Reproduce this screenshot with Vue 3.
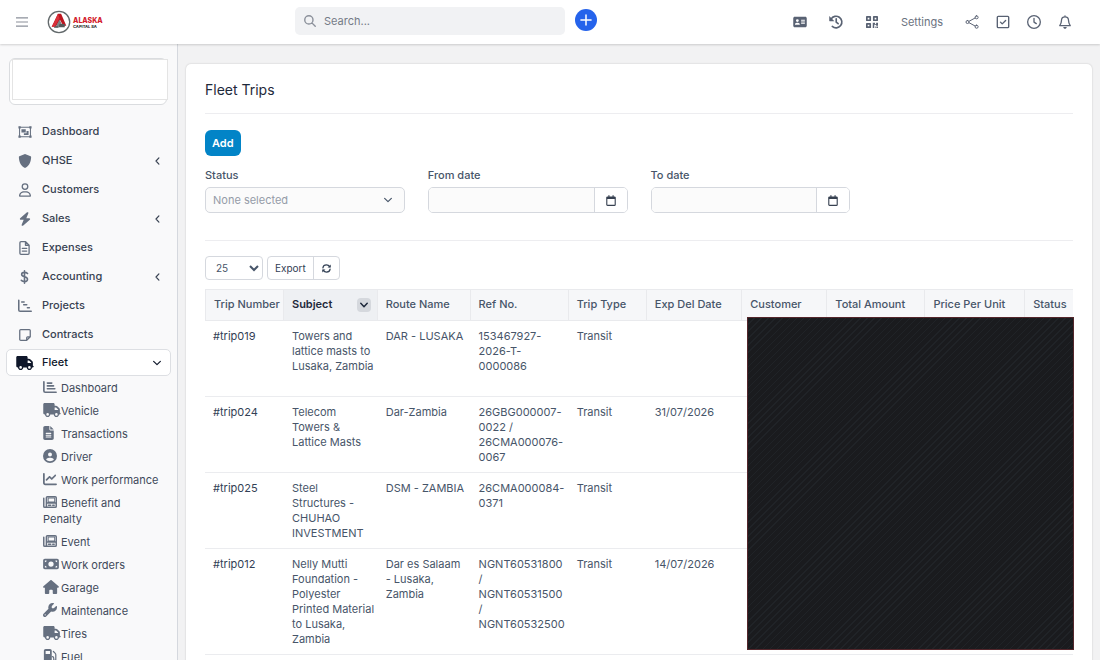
<template>
  <div class="app">
    <header class="topbar">
      <div class="topbar-left">
        <button class="icon-btn menu-btn" type="button" aria-label="Toggle menu">
          <Icon name="bars" :size="12" />
        </button>
        <a class="logo" href="#">
          <svg class="logo-mark" viewBox="0 0 46 46" width="24" height="24" aria-hidden="true">
            <circle cx="23" cy="23" r="20.5" fill="#fff" stroke="#62696b" stroke-width="2.5" />
            <path d="M21 7h6l10 23h-6l-6-11-8 13H9z" fill="#bd1620" />
            <path d="M21 7l-7 16-5 9h6l9-16z" fill="#d9303a" />
            <path d="M24 18l7 14h-4l-2-4-4 5h-5z" fill="#7d8285" />
            <path d="M24 27h10v6H22zM15 31h7v3h-9z" fill="#54585a" />
          </svg>
          <span class="logo-text">
            <span class="logo-name">ALASKA</span>
            <span class="logo-sub">CAPITAL SA</span>
          </span>
        </a>
      </div>

      <label class="search">
        <Icon name="search" :size="12" />
        <input type="search" placeholder="Search..." aria-label="Search" />
      </label>
      <button class="plus-btn" type="button" aria-label="Quick create">
        <Icon name="plus" :size="12" />
      </button>

      <nav class="topbar-right">
        <button class="icon-btn" type="button" aria-label="Contacts"><Icon name="idCard" :size="12" /></button>
        <button class="icon-btn" type="button" aria-label="History"><Icon name="history" :size="14" /></button>
        <button class="icon-btn" type="button" aria-label="QR code"><Icon name="qr" :size="12" /></button>
        <a class="settings" href="#">Settings</a>
        <div class="topbar-tools">
          <button class="icon-btn" type="button" aria-label="Share"><Icon name="share" :size="14" /></button>
          <button class="icon-btn" type="button" aria-label="Tasks"><Icon name="check" :size="14" /></button>
          <button class="icon-btn" type="button" aria-label="Timers"><Icon name="clock" :size="14" /></button>
          <button class="icon-btn" type="button" aria-label="Notifications"><Icon name="bell" :size="14" /></button>
        </div>
      </nav>
    </header>

    <div class="body">
      <aside class="sidebar">
        <div class="profile">
          <div class="profile-cover"></div>
        </div>

        <ul class="menu">
          <li v-for="item in menu" :key="item.label">
            <a class="menu-item" :class="{ active: item.open }" href="#">
              <span class="menu-icon"><Icon :name="item.icon" :size="item.size || 14" /></span>
              <span class="menu-label">{{ item.label }}</span>
              <Icon v-if="item.arrow" class="menu-arrow" :name="item.open ? 'down' : 'left'" :size="8" />
            </a>
            <ul v-if="item.open" class="submenu">
              <li v-for="sub in fleetMenu" :key="sub.label">
                <a href="#"><span class="sub-icon"><Icon :name="sub.icon" :size="14" /></span>{{ sub.label }}</a>
              </li>
            </ul>
          </li>
        </ul>
      </aside>

      <main class="content">
        <section class="card">
          <h1>Fleet Trips</h1>
          <hr />
          <button class="add-btn" type="button">Add</button>

          <div class="filters">
            <div class="field">
              <label for="status">Status</label>
              <div class="select-wrap">
                <select id="status" v-model="status">
                  <option value="">None selected</option>
                  <option value="transit">Transit</option>
                </select>
                <Icon name="down" :size="8" />
              </div>
            </div>
            <div class="field">
              <label for="from">From date</label>
              <div class="date-group">
                <input id="from" v-model="fromDate" type="text" />
                <button type="button" aria-label="Pick from date"><Icon name="calendar" :size="11" /></button>
              </div>
            </div>
            <div class="field">
              <label for="to">To date</label>
              <div class="date-group">
                <input id="to" v-model="toDate" type="text" />
                <button type="button" aria-label="Pick to date"><Icon name="calendar" :size="11" /></button>
              </div>
            </div>
          </div>
          <hr />

          <div class="table-tools">
            <select v-model="pageSize" class="page-size" aria-label="Rows per page">
              <option>10</option>
              <option>25</option>
              <option>50</option>
            </select>
            <div class="btn-group">
              <button type="button">Export</button>
              <button type="button" aria-label="Reload"><Icon name="reload" :size="9" /></button>
            </div>
          </div>

          <div class="table-wrap">
            <table>
              <colgroup>
                <col v-for="col in columns" :key="col.label" :style="{ width: col.width + '%' }" />
              </colgroup>
              <thead>
                <tr>
                  <th v-for="col in columns" :key="col.label" :class="{ sorted: col.sorted }">
                    <div class="th-inner">
                      {{ col.label }}
                      <span v-if="col.sorted" class="sort"><Icon name="downBold" :size="8" /></span>
                    </div>
                  </th>
                </tr>
              </thead>
              <tbody>
                <tr v-for="row in rows" :key="row.number">
                  <td><a href="#">{{ row.number }}</a></td>
                  <td>{{ row.subject }}</td>
                  <td>{{ row.route }}</td>
                  <td>{{ row.ref }}</td>
                  <td>{{ row.type }}</td>
                  <td>{{ row.date }}</td>
                  <td></td>
                  <td></td>
                  <td></td>
                  <td></td>
                </tr>
              </tbody>
            </table>
            <div class="table-mask"></div>
          </div>
        </section>
      </main>
    </div>
  </div>
</template>

<script setup>
import { ref, h } from 'vue'

// d: filled path, s: stroked path, sw: stroke width
const icons = {
  bars: { s: 'M0 80H512M0 256H512M0 432H512', sw: 44, cap: 'butt' },
  search: { s: 'M208 32a176 176 0 1 0 0 352a176 176 0 1 0 0-352zM336 336L480 480', sw: 60 },
  plus: { s: 'M256 40V472M40 256H472', sw: 64 },
  idCard: { w: 576, d: 'M64 32h448c35 0 64 29 64 64v320c0 35-29 64-64 64H64c-35 0-64-29-64-64V96c0-35 29-64 64-64zM176 136a60 60 0 1 0 0 120a60 60 0 1 0 0-120zM72 368h208c0-50-36-80-80-80h-48c-44 0-80 30-80 80zM336 160v40h160v-40zM336 232v40h160v-40zM336 304v40h160v-40z' },
  history: { s: 'M76 150A212 212 0 1 1 120 420M264 140V262L334 318', sw: 60, d: 'M8 32V208c0 10 8 16 16 16H200z' },
  qr: { s: 'M36 36H180V180H36zM332 36H476V180H332zM36 332H180V476H36z', sw: 72, d: 'M288 288h96v48h48v-48h80v128h-80v-40h-80v136h-64zM400 448h48v64h-48zM464 448h48v64h-48z' },
  share: { s: 'M148 230L372 108M148 282L372 404M92 200a56 56 0 1 0 0 112a56 56 0 1 0 0-112zM424 28a56 56 0 1 0 0 112a56 56 0 1 0 0-112zM424 372a56 56 0 1 0 0 112a56 56 0 1 0 0-112z', sw: 36 },
  check: { s: 'M80 48H432a32 32 0 0 1 32 32V432a32 32 0 0 1-32 32H80a32 32 0 0 1-32-32V80a32 32 0 0 1 32-32zM164 260L228 324L352 200', sw: 50 },
  clock: { s: 'M256 24a232 232 0 1 0 0 464a232 232 0 1 0 0-464zM256 120V260L340 316', sw: 48 },
  bell: { w: 448, s: 'M224 24V64M224 64C140 64 92 124 92 200C92 290 66 330 28 392H420C382 330 356 290 356 200C356 124 308 64 224 64z', sw: 48, d: 'M160 440h128c0 40-28 72-64 72s-64-32-64-72z' },
  left: { w: 320, s: 'M250 60L64 256L250 452', sw: 76 },
  down: { s: 'M40 150L256 362L472 150', sw: 76 },
  downBold: { s: 'M50 150L256 362L462 150', sw: 96 },
  calendar: { w: 448, s: 'M64 96H384a36 36 0 0 1 36 36V448a36 36 0 0 1-36 36H64a36 36 0 0 1-36-36V132a36 36 0 0 1 36-36zM128 24V90M320 24V90', sw: 52, d: 'M28 90H420V184H28z' },
  reload: { s: 'M50 220C66 110 150 50 256 50C340 50 400 90 450 160M462 292C446 402 362 462 256 462C172 462 112 422 62 352', sw: 68, d: 'M496 24V206H314zM16 488V306H198z' },
  objectGroup: { w: 576, s: 'M56 56H520V456H56z', sw: 44, d: 'M8 8h96v96H8zM472 8h96v96h-96zM8 408h96v96H8zM472 408h96v96h-96zM136 136h184v144H136zM352 208h88v176H240v-80h112z' },
  shield: { d: 'M256 0L462 84C474 88 480 100 480 114C478 230 440 420 276 506C264 513 248 513 236 506C72 420 34 230 32 114C32 100 38 88 50 84z' },
  user: { w: 448, d: 'M304 128a80 80 0 1 0-160 0 80 80 0 1 0 160 0zM96 128a128 128 0 1 1 256 0A128 128 0 1 1 96 128zM49.3 464H398.7c-8.9-63.3-63.3-112-129-112H178.3c-65.7 0-120.1 48.7-129 112zM0 482.3C0 383.8 79.8 304 178.3 304h91.4C368.2 304 448 383.8 448 482.3c0 16.4-13.3 29.7-29.7 29.7H29.7C13.3 512 0 498.7 0 482.3z' },
  bolt: { w: 448, d: 'M349.4 44.6c5.9-13.7 1.5-29.7-10.6-38.5s-28.6-8-39.9 1.8l-256 224c-10 8.8-13.6 22.9-8.9 35.3S50.7 288 64 288H175.5L98.6 467.4c-5.9 13.7-1.5 29.7 10.6 38.5s28.6 8 39.9-1.8l256-224c10-8.8 13.6-22.9 8.9-35.3s-16.6-20.7-30-20.7H272.5L349.4 44.6z' },
  fileOutline: { w: 384, s: 'M64 24H232L360 152V448a40 40 0 0 1-40 40H64a40 40 0 0 1-40-40V64a40 40 0 0 1 40-40zM228 28V156H356M112 272H272M112 368H272', sw: 48 },
  dollar: { w: 320, s: 'M160 28V484M272 130C240 98 200 88 156 88C96 88 56 116 56 162C56 270 270 226 270 340C270 394 220 424 160 424C110 424 72 404 44 380', sw: 58 },
  gantt: { s: 'M28 48V400a48 48 0 0 0 48 48H484M136 112H224M208 208H320M344 320H416', sw: 56 },
  note: { w: 448, s: 'M64 56H384a36 36 0 0 1 36 36V324L288 456H64a36 36 0 0 1-36-36V92a36 36 0 0 1 36-36zM288 452V356a32 32 0 0 1 32-32H416', sw: 48 },
  truck: { w: 640, d: 'M48 0C21.5 0 0 21.5 0 48V368c0 26.5 21.5 48 48 48H64c0 53 43 96 96 96s96-43 96-96H384c0 53 43 96 96 96s96-43 96-96h32c17.7 0 32-14.3 32-32s-14.3-32-32-32V288 256 237.3c0-17-6.7-33.3-18.7-45.3L512 114.7c-12-12-28.3-18.7-45.3-18.7H416V48c0-26.5-21.5-48-48-48H48zM416 160h50.7L544 237.3V256H416V160zM112 416a48 48 0 1 1 96 0 48 48 0 1 1 -96 0zm368-48a48 48 0 1 1 0 96 48 48 0 1 1 0-96z' },
  chartBar: { s: 'M32 64V400a48 48 0 0 0 48 48H480M160 112H320M160 216H384M160 320H432', sw: 60 },
  file: { w: 384, d: 'M64 0C28.7 0 0 28.7 0 64V448c0 35.3 28.7 64 64 64H320c35.3 0 64-28.7 64-64V160H256c-17.7 0-32-14.3-32-32V0H64zM256 0V128H384L256 0zM104 248H280c9 0 16 9 16 20s-7 20-16 20H104c-9 0-16-9-16-20s7-20 16-20zm0 68H280c9 0 16 9 16 20s-7 20-16 20H104c-9 0-16-9-16-20s7-20 16-20zm0 68H280c9 0 16 9 16 20s-7 20-16 20H104c-9 0-16-9-16-20s7-20 16-20z' },
  circleUser: { d: 'M399 384.2C376.9 345.8 335.4 320 288 320H224c-47.4 0-88.9 25.8-111 64.2c35.2 39.2 86.2 63.8 143 63.8s107.8-24.7 143-63.8zM0 256a256 256 0 1 1 512 0A256 256 0 1 1 0 256zm256 16a72 72 0 1 0 0-144 72 72 0 1 0 0 144z' },
  chartLine: { d: 'M64 64c0-17.7-14.3-32-32-32S0 46.3 0 64V400c0 44.2 35.8 80 80 80H480c17.7 0 32-14.3 32-32s-14.3-32-32-32H80c-8.8 0-16-7.2-16-16V64zm406.6 86.6c12.5-12.5 12.5-32.8 0-45.3s-32.8-12.5-45.3 0L320 210.7l-57.4-57.4c-12.5-12.5-32.8-12.5-45.3 0l-112 112c-12.5 12.5-12.5 32.8 0 45.3s32.8 12.5 45.3 0L240 221.3l57.4 57.4c12.5 12.5 32.8 12.5 45.3 0l128-128z' },
  newspaper: { s: 'M160 60H448a36 36 0 0 1 36 36V416a36 36 0 0 1-36 36H64a36 36 0 0 1-36-36V120M124 420V96a36 36 0 0 1 36-36M136 290H470M200 374H284M356 374H410', sw: 54, d: 'M170 90H440V290H170zM206 130V236H410V130z' },
  money: { w: 576, d: 'M64 64C28.7 64 0 92.7 0 128V384c0 35.3 28.7 64 64 64H512c35.3 0 64-28.7 64-64V128c0-35.3-28.7-64-64-64H64zM128 384H64V320c35.3 0 64 28.7 64 64zM64 192V128h64c0 35.3-28.7 64-64 64zM448 384c0-35.3 28.7-64 64-64v64H448zM512 192c-35.3 0-64-28.7-64-64h64v64zM288 160a96 96 0 1 1 0 192 96 96 0 1 1 0-192z' },
  house: { w: 576, d: 'M575.8 255.5c0 18-15 32.1-32 32.1h-32l.7 160.2c0 2.7-.2 5.4-.5 8.1V472c0 22.1-17.9 40-40 40H456c-1.1 0-2.2 0-3.3-.1c-1.4 .1-2.8 .1-4.2 .1H416 392c-22.1 0-40-17.9-40-40V448 384c0-17.7-14.3-32-32-32H256c-17.7 0-32 14.3-32 32v64 24c0 22.1-17.9 40-40 40H160 128.1c-1.5 0-3-.1-4.5-.2c-1.2 .1-2.4 .2-3.6 .2H104c-22.1 0-40-17.9-40-40V360c0-.9 0-1.9 .1-2.8V287.6H32c-18 0-32-14-32-32.1c0-9 3-17 10-24L266.4 8c7-7 15-8 22-8s15 2 21 7L564.8 231.5c8 7 12 15 11 24z' },
  wrench: { d: 'M352 320c88.4 0 160-71.6 160-160c0-15.3-2.2-30.1-6.2-44.2c-3.1-10.8-16.4-13.2-24.3-5.3l-76.8 76.8c-3 3-7.1 4.7-11.3 4.7H336c-8.8 0-16-7.2-16-16V118.6c0-4.2 1.7-8.3 4.7-11.3l76.8-76.8c7.9-7.9 5.4-21.2-5.3-24.3C382.1 2.2 367.3 0 352 0C263.6 0 192 71.6 192 160c0 19.1 3.4 37.5 9.5 54.5L19.9 396.1C7.2 408.8 0 426.1 0 444.1C0 481.6 30.4 512 67.9 512c18 0 35.3-7.2 48-19.9L297.5 310.5c17 6.2 35.4 9.5 54.5 9.5zM80 408a24 24 0 1 1 0 48 24 24 0 1 1 0-48z' },
  gas: { s: 'M380 90L440 150C456 166 468 180 468 210V380a36 36 0 0 1-76 0V330C392 300 370 280 340 280', sw: 44, d: 'M32 64C32 29 61 0 96 0H256c35 0 64 29 64 64V448a32 32 0 0 1 0 64H32a32 32 0 0 1 0-64zM96 72V184H256V72z' }
}

const Icon = ({ name, size }) => {
  const i = icons[name]
  const w = i.w || 512
  return h(
    'svg',
    { viewBox: `0 0 ${w} 512`, height: size, width: Math.round((size * w) / 512), class: 'icon', 'aria-hidden': 'true' },
    [
      i.d && h('path', { d: i.d, fill: 'currentColor', 'fill-rule': 'evenodd' }),
      i.s && h('path', {
        d: i.s,
        fill: 'none',
        stroke: 'currentColor',
        'stroke-width': i.sw,
        'stroke-linecap': i.cap || 'round',
        'stroke-linejoin': 'round'
      })
    ]
  )
}
Icon.props = ['name', 'size']

const status = ref('')
const fromDate = ref('')
const toDate = ref('')
const pageSize = ref('25')

const menu = [
  { label: 'Dashboard', icon: 'objectGroup', size: 12 },
  { label: 'QHSE', icon: 'shield', arrow: true },
  { label: 'Customers', icon: 'user' },
  { label: 'Sales', icon: 'bolt', arrow: true },
  { label: 'Expenses', icon: 'fileOutline' },
  { label: 'Accounting', icon: 'dollar', arrow: true },
  { label: 'Projects', icon: 'gantt' },
  { label: 'Contracts', icon: 'note' },
  { label: 'Fleet', icon: 'truck', arrow: true, open: true }
]

const fleetMenu = [
  { label: 'Dashboard', icon: 'chartBar' },
  { label: 'Vehicle', icon: 'truck' },
  { label: 'Transactions', icon: 'file' },
  { label: 'Driver', icon: 'circleUser' },
  { label: 'Work performance', icon: 'chartLine' },
  { label: 'Benefit and Penalty', icon: 'newspaper' },
  { label: 'Event', icon: 'newspaper' },
  { label: 'Work orders', icon: 'money' },
  { label: 'Garage', icon: 'house' },
  { label: 'Maintenance', icon: 'wrench' },
  { label: 'Tires', icon: 'truck' },
  { label: 'Fuel', icon: 'gas' }
]

const columns = [
  { label: 'Trip Number', width: 9.1 },
  { label: 'Subject', width: 10.8, sorted: true },
  { label: 'Route Name', width: 10.7 },
  { label: 'Ref No.', width: 11.3 },
  { label: 'Trip Type', width: 9 },
  { label: 'Exp Del Date', width: 11 },
  { label: 'Customer', width: 9.8 },
  { label: 'Total Amount', width: 11.3 },
  { label: 'Price Per Unit', width: 11.5 },
  { label: 'Status', width: 5.5 }
]

const rows = [
  { number: '#trip019', subject: 'Towers and lattice masts to Lusaka, Zambia', route: 'DAR - LUSAKA', ref: '153467927-2026-T-0000086', type: 'Transit', date: '' },
  { number: '#trip024', subject: 'Telecom Towers & Lattice Masts', route: 'Dar-Zambia', ref: '26GBG000007-0022 / 26CMA000076-0067', type: 'Transit', date: '31/07/2026' },
  { number: '#trip025', subject: 'Steel Structures - CHUHAO INVESTMENT', route: 'DSM - ZAMBIA', ref: '26CMA000084-0371', type: 'Transit', date: '' },
  { number: '#trip012', subject: 'Nelly Mutti Foundation - Polyester Printed Material to Lusaka, Zambia', route: 'Dar es Salaam - Lusaka, Zambia', ref: 'NGNT60531800 / NGNT60531500 / NGNT60532500', type: 'Transit', date: '14/07/2026' }
]
</script>

<style>
body { background: #f2f2f3; }
</style>

<style scoped>
.app {
  height: 100vh;
  display: flex;
  flex-direction: column;
  overflow: hidden;
  font-family: Inter, "Liberation Sans", sans-serif;
  font-size: 11px;
  line-height: 15px;
  color: #475569;
}
.app *, .app *::before { box-sizing: border-box; }
a { color: inherit; text-decoration: none; }
button, input, select { font: inherit; color: inherit; margin: 0; }
button { cursor: pointer; }
ul { list-style: none; margin: 0; padding: 0; }
.icon { flex: none; display: block; overflow: visible; }

/* top bar */
.topbar {
  position: relative;
  z-index: 2;
  flex: none;
  height: 44px;
  display: flex;
  align-items: center;
  background: #fff;
  box-shadow: 0 1px 2px rgba(0, 0, 0, .16);
  color: #6b7280;
}
.topbar-left { flex: 0 0 295px; display: flex; align-items: center; padding-left: 16px; }
.icon-btn {
  width: 14px;
  height: 20px;
  padding: 0;
  border: 0;
  background: none;
  display: flex;
  align-items: center;
  justify-content: center;
  color: #596273;
}
.menu-btn { width: 12px; margin-right: 19px; color: #8b909a; }
.logo { display: flex; align-items: center; gap: 2px; }
.logo-text { display: flex; flex-direction: column; padding-top: 2px; }
.logo-name { font-size: 7px; line-height: 7px; font-weight: 800; color: #d3202b; }
.logo-sub { font-size: 4px; line-height: 5px; font-weight: 800; color: #333; }

.search {
  flex: 0 1 270px;
  height: 28px;
  margin-bottom: 2px;
  display: flex;
  align-items: center;
  gap: 8px;
  padding: 0 9px;
  border-radius: 5px;
  background: #f1f2f4;
  color: #8b909a;
}
.search input { flex: 1; min-width: 0; border: 0; padding: 0; background: none; outline: none; color: #6b7280; }
.search input::placeholder { color: #757b87; }
.plus-btn {
  width: 22px;
  height: 22px;
  margin: 0 0 4px 10px;
  padding: 0;
  border: 0;
  border-radius: 50%;
  background: #2563eb;
  color: #fff;
  display: flex;
  align-items: center;
  justify-content: center;
}
.topbar-right { margin-left: auto; padding-right: 28px; display: flex; align-items: center; gap: 22px; }
.topbar-tools { display: flex; gap: 17px; }

.body { flex: 1; min-height: 0; display: flex; }

/* sidebar */
.sidebar {
  flex: 0 0 178px;
  padding-top: 14px;
  background: #f9f9fa;
  border-right: 1px solid #d5d8de;
  overflow: hidden;
}
.profile {
  position: relative;
  height: 47px;
  margin: 0 10px 12px 9px;
  border: 1px solid #dadcdf;
  border-radius: 6px;
  background: #fff;
}
.profile-cover {
  position: absolute;
  top: 0;
  left: 2px;
  right: -2px;
  bottom: 4px;
  border: 1px solid #e4e4e4;
  background: #fff;
}
.menu-item {
  display: flex;
  align-items: center;
  height: 29px;
  margin: 0 6px;
  padding: 0 11px 0 10px;
  font-weight: 500;
  color: #374151;
}
.menu-item.active {
  height: 27px;
  padding: 0 9px;
  border: 1px solid #dddfe3;
  border-radius: 5px;
  background: #fff;
  color: #0f172a;
}
.menu-icon { width: 17px; display: flex; justify-content: center; margin-right: 9px; color: #667080; }
.active .menu-icon { color: #0f172a; }
.menu-label { flex: 1; }
.submenu li { padding: 4px 16px 3px 43px; line-height: 16px; }
.submenu a { color: #3f4a5a; }
.sub-icon { display: inline-flex; width: 18px; height: 14px; vertical-align: -2px; color: #667080; }

/* content */
.content { flex: 1; min-width: 0; padding: 20px 8px 0; }
.card {
  min-height: 100%;
  padding: 17px 19px;
  border-radius: 5px;
  background: #fff;
  box-shadow: 0 0 2px rgba(0, 0, 0, .2);
}
h1 { margin: 0 0 15px; font-size: 14px; line-height: 17px; font-weight: 400; color: #1e293b; }
hr { height: 1px; margin: 0; border: 0; background: #ededf0; }
.add-btn {
  height: 26px;
  margin: 16px 0 12px;
  padding: 0 7px;
  border: 0;
  border-radius: 6px;
  background: #0284c7;
  color: #fff;
  font-weight: 600;
  display: block;
}
.filters { display: grid; grid-template-columns: repeat(4, minmax(0, 1fr)); column-gap: 23px; margin-bottom: 27px; }
.field label { display: block; margin-bottom: 4px; font-weight: 500; color: #475569; }
.select-wrap { position: relative; }
.select-wrap select {
  width: 100%;
  height: 26px;
  padding: 0 24px 0 7px;
  border: 1px solid #d5d8de;
  border-radius: 5px;
  background: #fbfbfb;
  color: #959ba8;
  appearance: none;
}
.select-wrap .icon { position: absolute; right: 13px; top: 9px; color: #475569; pointer-events: none; }
.date-group { display: flex; height: 26px; border: 1px solid #d5d8de; border-radius: 5px; overflow: hidden; }
.date-group input { flex: 1; min-width: 0; border: 0; padding: 0 8px; background: #fbfbfb; outline: none; }
.date-group button {
  width: 33px;
  padding: 0;
  border: 0;
  border-left: 1px solid #d5d8de;
  background: #fff;
  color: #374151;
  display: flex;
  align-items: center;
  justify-content: center;
}

.table-tools { display: flex; gap: 4px; margin: 15px 0 9px; }
.page-size {
  width: 58px;
  height: 24px;
  padding: 0 0 0 6px;
  border: 1px solid #d5d8de;
  border-radius: 4px;
  background: #fff;
  font-size: 10px;
}
.btn-group { display: flex; border: 1px solid #d5d8de; border-radius: 4px; }
.btn-group button {
  height: 22px;
  padding: 0 7px;
  border: 0;
  background: none;
  font-size: 10px;
  color: #334155;
  display: flex;
  align-items: center;
}
.btn-group button + button { padding: 0 8px; border-left: 1px solid #d5d8de; }

.table-wrap { position: relative; }
table { width: 100%; table-layout: fixed; border-collapse: separate; border-spacing: 0; }
th {
  height: 32px;
  padding: 0 0 1px 8px;
  border: 1px solid #e9eaed;
  border-width: 1px 1px 1px 0;
  background: #f6f7f9;
  text-align: left;
  font-weight: 500;
  color: #475569;
  white-space: nowrap;
}
th:first-child { border-left-width: 1px; }
th:last-child { border-right: 0; }
th.sorted { background: #eef0f3; font-weight: 600; color: #1e293b; }
.th-inner { display: flex; align-items: center; justify-content: space-between; padding-right: 6px; }
.sort {
  width: 14px;
  height: 14px;
  border-radius: 4px;
  background: #d5d8dd;
  display: flex;
  align-items: center;
  justify-content: center;
}
td { height: 76px; padding: 8px 3px 7px 8px; border-bottom: 1px solid #ebecef; vertical-align: top; }
td a { color: #334155; }
/* hides the commercial columns */
.table-mask {
  position: absolute;
  top: 28px;
  right: -1px;
  bottom: 5px;
  width: 327px;
  border: 1px solid #54262b;
  background: repeating-linear-gradient(135deg, #1a1b1e 0 4px, #202327 4px 5px);
}
</style>
